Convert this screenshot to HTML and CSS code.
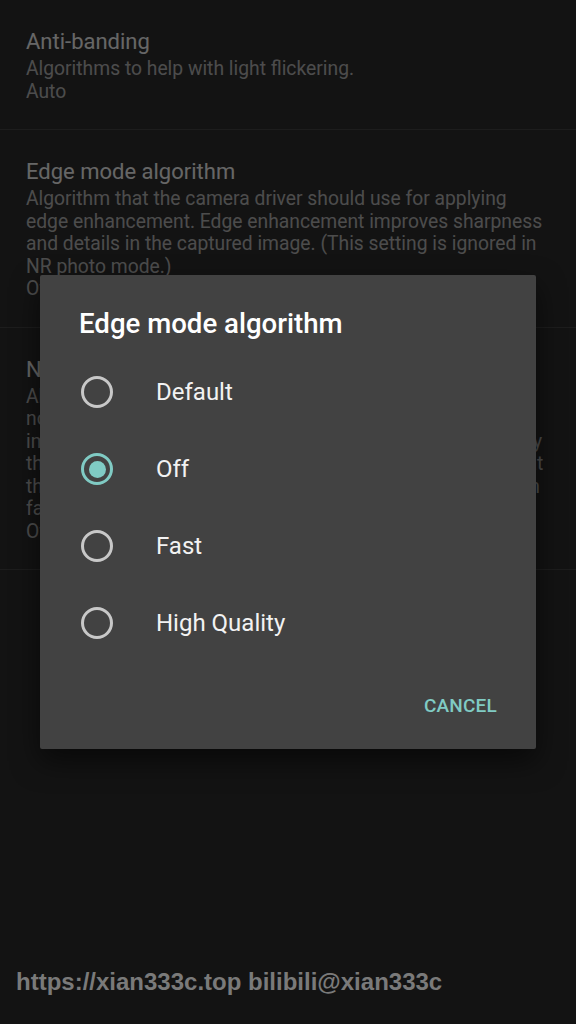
FILE: index.html
```html
<!DOCTYPE html>
<html lang="en">
<head>
    <meta charset="UTF-8">
    <meta name="viewport" content="width=device-width, initial-scale=1.0">
    <title>Settings</title>
    <link rel="stylesheet" href="styles.css">
</head>
<body>
    <ul class="prefList">
        <li class="pref">
            <p class="prefTitle">Anti-banding</p>
            <p class="prefSummary">Algorithms to help with light flickering.</p>
            <p class="prefSummary">Auto</p>
        </li>
        <li class="pref">
            <p class="prefTitle">Edge mode algorithm</p>
            <p class="prefSummary">Algorithm that the camera driver should use for applying<br>
                edge enhancement. Edge enhancement improves sharpness<br>
                and details in the captured image. (This setting is ignored in<br>
                NR photo mode.)</p>
            <p class="prefSummary">Off</p>
        </li>
        <li class="pref">
            <p class="prefTitle">Noise reduction mode</p>
            <p class="prefSummary">Algorithm that the camera driver should use for applying<br>
                noise reduction. Noise reduction improves the<br>
                image quality by reducing excessive noise which is added by<br>
                the capture process particularly in dark conditions. Note that<br>
                this may have no effect on some devices, and it is ignored in<br>
                fast burst mode and in NR photo mode.</p>
            <p class="prefSummary">Off</p>
        </li>
    </ul>

    <div class="scrim"></div>

    <div class="dialog">
        <h2 class="dialogTitle">Edge mode algorithm</h2>
        <ul class="choices">
            <li class="choice"><span class="radio"></span>Default</li>
            <li class="choice"><span class="radio checked"></span>Off</li>
            <li class="choice"><span class="radio"></span>Fast</li>
            <li class="choice"><span class="radio"></span>High Quality</li>
        </ul>
        <div class="dialogButtons">
            <span class="textButton">CANCEL</span>
        </div>
    </div>

    <p class="watermark">https://xian333c.top bilibili@xian333c</p>
</body>
</html>
```

FILE: styles.css
```css
* {
    margin: 0;
    padding: 0;
    box-sizing: border-box;
}
body {
    width: 576px;
    height: 1024px;
    overflow: hidden;
    background: #303030;
    font-family: Roboto, "Noto Sans", sans-serif;
}
.prefList {
    list-style-type: none;
}
.pref {
    padding: 26px 26px 26px 26px;
    border-bottom: 1px solid rgba(255, 255, 255, 0.12);
}
.prefTitle {
    font-size: 22px;
    line-height: 32px;
    color: #ffffff;
}
.prefSummary {
    font-size: 19.3px;
    line-height: 22.5px;
    color: rgba(255, 255, 255, 0.7);
    white-space: nowrap;
}
.scrim {
    position: absolute;
    top: 0;
    left: 0;
    width: 576px;
    height: 1024px;
    background: rgba(0, 0, 0, 0.6);
}
.dialog {
    position: absolute;
    top: 275px;
    left: 40px;
    width: 496px;
    height: 474px;
    background: #424242;
    border-radius: 2px;
    box-shadow: 0 12px 28px rgba(0, 0, 0, 0.55);
    padding-top: 33px;
}
.dialogTitle {
    padding-left: 39px;
    font-size: 27.6px;
    font-weight: 500;
    line-height: 32px;
    color: #ffffff;
}
.choices {
    list-style-type: none;
    margin-top: 13.5px;
}
.choice {
    display: flex;
    align-items: center;
    gap: 43px;
    height: 77px;
    padding-left: 41px;
    font-size: 24px;
    color: #f2f2f2;
}
.radio {
    width: 32px;
    height: 32px;
    border: 3.5px solid #c8c8c8;
    border-radius: 50%;
    display: flex;
    align-items: center;
    justify-content: center;
}
.radio.checked {
    border-color: #80cbc4;
}
.radio.checked::after {
    content: "";
    width: 17px;
    height: 17px;
    border-radius: 50%;
    background: #80cbc4;
}
.dialogButtons {
    display: flex;
    justify-content: flex-end;
    align-items: center;
    height: 88px;
    padding-right: 39px;
}
.textButton {
    font-size: 19px;
    font-weight: 500;
    color: #80cbc4;
    letter-spacing: 0.2px;
}
.watermark {
    position: absolute;
    left: 16px;
    top: 968px;
    font-family: "Liberation Sans", Arial, sans-serif;
    font-weight: bold;
    font-size: 24px;
    color: #7a7a7a;
}
```
